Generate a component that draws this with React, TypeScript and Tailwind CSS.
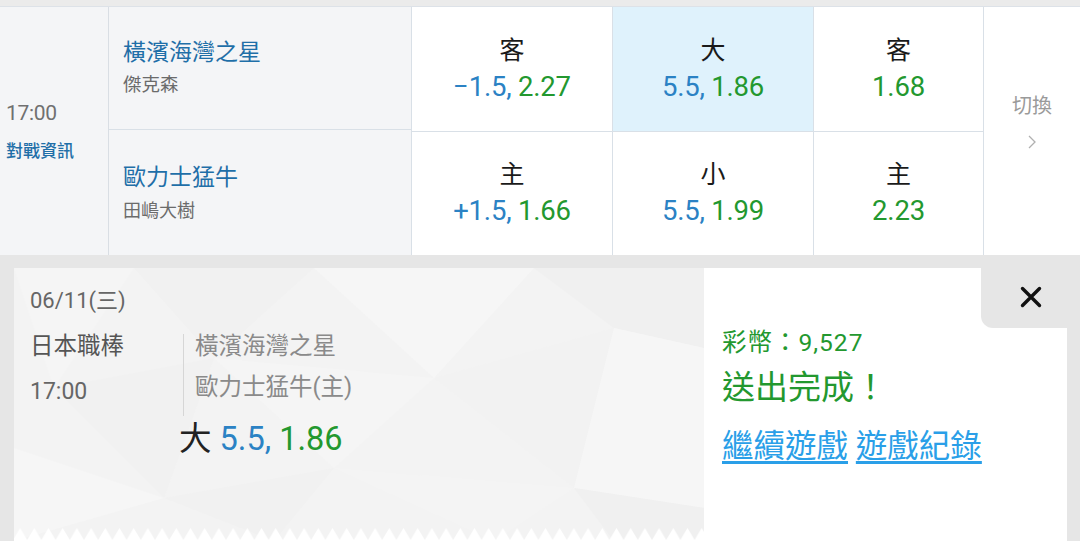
import React from "react";

const FONT = 'Roboto, "Noto Sans CJK TC", "Noto Sans", sans-serif';

function OddsCell({ label, a, b, highlight, last }: { label: string; a?: string; b: string; highlight?: boolean; last?: boolean }) {
  return (
    <div
      className={`flex flex-col items-center justify-center ${highlight ? "bg-[#dff2fc]" : "bg-white"} ${last ? "" : "border-b border-[#d9e0e7]"}`}
      style={{ flex: 1 }}
    >
      <div className="text-[25px] leading-[36px] text-[#1a1a1a]">{label}</div>
      <div className="text-[27.5px] leading-[36px] tracking-[-0.2px]">
        {a && <span className="text-[#2b82c4]">{a}, </span>}
        <span className="text-[#23982f]">{b}</span>
      </div>
    </div>
  );
}

function TicketBg() {
  return (
    <svg className="absolute inset-0 h-full w-full" viewBox="0 0 690 273" preserveAspectRatio="none">
      <rect width="690" height="273" fill="#f3f3f3" />
      <polygon points="0,0 120,0 40,120" fill="#f5f5f5" />
      <polygon points="120,0 300,0 200,90" fill="#f1f1f1" />
      <polygon points="300,0 520,0 420,110" fill="#f6f6f6" />
      <polygon points="520,0 690,0 690,80 600,60" fill="#f0f0f0" />
      <polygon points="40,120 200,90 150,230" fill="#f1f1f1" />
      <polygon points="200,90 420,110 320,200" fill="#f5f5f5" />
      <polygon points="420,110 600,60 560,220" fill="#f2f2f2" />
      <polygon points="600,60 690,80 690,240 560,220" fill="#f6f6f6" />
      <polygon points="0,180 150,230 0,273" fill="#f6f6f6" />
      <polygon points="150,230 320,200 260,273" fill="#f1f1f1" />
      <polygon points="320,200 560,220 480,273" fill="#f4f4f4" />
      <polygon points="560,220 690,240 690,273 600,273" fill="#f0f0f0" />
    </svg>
  );
}

function Zigzag() {
  return (
    <svg className="absolute bottom-0 left-0 h-[13px] w-full" preserveAspectRatio="none">
      <defs>
        <pattern id="zz" width="14.2" height="13" patternUnits="userSpaceOnUse" x="-1">
          <polygon points="0,12 7.1,0 14.2,12 14.2,13 0,13" fill="#ffffff" />
        </pattern>
      </defs>
      <rect width="100%" height="13" fill="url(#zz)" />
    </svg>
  );
}

export default function App() {
  return (
    <div className="w-[1080px] h-[541px] overflow-hidden bg-[#e6e6e6]" style={{ fontFamily: FONT }}>
      <div className="h-[7px] bg-[#ebebeb] border-b border-[#dde2e8]" />
      <div className="flex h-[248px]">
        <div className="w-[109px] bg-[#f4f5f7] border-r border-[#d9dee4] flex flex-col justify-center pl-[6px]">
          <div className="text-[21px] leading-[24px] text-[#707070] tracking-[-0.3px]">17:00</div>
          <div className="mt-[15px] text-[17px] leading-[22px] text-[#1f6fa8] font-medium">對戰資訊</div>
        </div>
        <div className="w-[302px] bg-[#f4f5f7] flex flex-col">
          <div className="h-[123px] border-b border-[#d9e0e7] pl-[14px] pt-[31px]">
            <div className="text-[23px] leading-[30px] text-[#1f6fa8]">橫濱海灣之星</div>
            <div className="mt-[6px] text-[18.5px] leading-[22px] text-[#6b6b6b]">傑克森</div>
          </div>
          <div className="flex-1 pl-[14px] pt-[33px]">
            <div className="text-[23px] leading-[30px] text-[#1f6fa8]">歐力士猛牛</div>
            <div className="mt-[7px] text-[18px] leading-[22px] text-[#6b6b6b]">田嶋大樹</div>
          </div>
        </div>
        <div className="w-[201px] flex flex-col border-l border-[#d9e0e7]">
          <OddsCell label="客" a="−1.5" b="2.27" />
          <OddsCell label="主" a="+1.5" b="1.66" last />
        </div>
        <div className="w-[201px] flex flex-col border-l border-[#d9e0e7]">
          <OddsCell label="大" a="5.5" b="1.86" highlight />
          <OddsCell label="小" a="5.5" b="1.99" last />
        </div>
        <div className="w-[170px] flex flex-col border-l border-[#d9e0e7]">
          <OddsCell label="客" b="1.68" />
          <OddsCell label="主" b="2.23" last />
        </div>
        <div className="flex-1 bg-white border-l border-[#d9e0e7] flex flex-col items-center justify-center pb-[20px]">
          <div className="text-[20px] leading-[28px] text-[#9a9a9a]">切換</div>
          <svg className="mt-[14px]" width="10" height="16" viewBox="0 0 10 16">
            <polyline points="2,2 8,8 2,14" fill="none" stroke="#b0b0b0" strokeWidth="1.3" />
          </svg>
        </div>
      </div>
      <div className="h-[13px] bg-[#e6e6e6]" />
      <div className="flex h-[273px] pl-[14px] pr-[13px]">
        <div className="relative w-[690px] h-full">
          <TicketBg />
          <Zigzag />
          <div className="relative pl-[16px] pt-[20px]">
            <div className="text-[22px] leading-[26px] text-[#666]">06/11(三)</div>
            <div className="flex mt-[20px]">
              <div className="w-[154px] border-r border-[#d6d6d6] h-[82px] shrink-0">
                <div className="text-[23.5px] leading-[30px] text-[#555] -mt-[3px]">日本職棒</div>
                <div className="mt-[17px] text-[23px] leading-[28px] text-[#666]">17:00</div>
              </div>
              <div className="pl-[11px] -mt-[3px]">
                <div className="text-[23.5px] leading-[30px] text-[#8a8a8a]">橫濱海灣之星</div>
                <div className="mt-[11px] text-[23.5px] leading-[30px] text-[#8a8a8a]">歐力士猛牛(主)</div>
              </div>
            </div>
            <div className="pl-[149px] mt-[3px] text-[32.5px] leading-[40px]">
              <span className="text-[#222]">大 </span>
              <span className="text-[#2b82c4]">5.5, </span>
              <span className="text-[#23982f]">1.86</span>
            </div>
          </div>
        </div>
        <div className="relative flex-1 bg-white pl-[18px] pt-[60px]">
          <div className="absolute top-0 right-0 w-[86px] h-[60px] bg-[#e6e6e6] rounded-bl-[12px] flex items-center justify-center pl-[14px] pb-[2px]">
            <svg width="22" height="22" viewBox="0 0 22 22">
              <path d="M2.5 2.5 L19.5 19.5 M19.5 2.5 L2.5 19.5" stroke="#111" strokeWidth="3.4" strokeLinecap="round" />
            </svg>
          </div>
          <div className="text-[24.5px] leading-[30px] text-[#23982f] tracking-[1px]">彩幣：9,527</div>
          <div className="mt-[10px] text-[33px] leading-[40px] text-[#23982f]">送出完成！</div>
          <div className="mt-[20px] text-[31.5px] leading-[38px] text-[#2a9fe8]">
            <span className="underline underline-offset-[4px]">繼續遊戲</span>
            <span> </span>
            <span className="underline underline-offset-[4px]">遊戲紀錄</span>
          </div>
        </div>
      </div>
    </div>
  );
}
